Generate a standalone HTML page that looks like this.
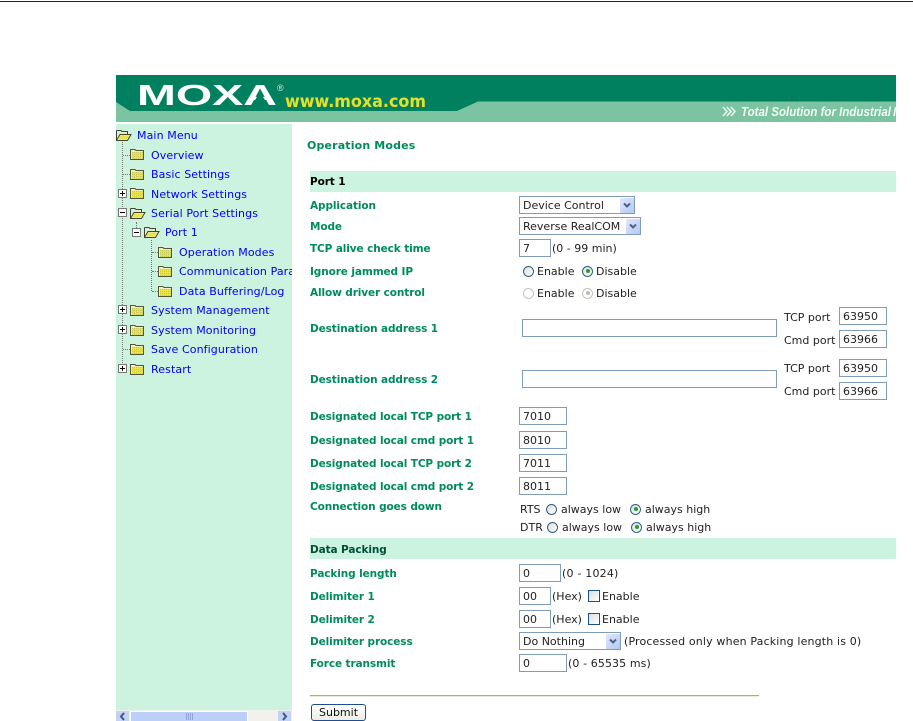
<!DOCTYPE html>
<html><head><meta charset="utf-8"><style>
html,body{margin:0;padding:0;background:#fff;width:913px;height:721px;overflow:hidden}
body{position:relative;font-family:"DejaVu Sans","Liberation Sans",sans-serif;font-size:11px;color:#222}
.t,.l,.m{position:absolute;white-space:nowrap;line-height:14px;height:14px;margin-top:1px}
.m{color:#0000f0;letter-spacing:.1px}
.l{color:#008a60;font-weight:bold;font-size:10.5px;letter-spacing:-.1px}
.b{position:absolute;border:1.5px solid #7f9db9;box-sizing:border-box;background:#fff;font-size:11px;line-height:17px;padding-left:3px;color:#222;white-space:nowrap}
.a{position:absolute;background:linear-gradient(135deg,#dfe8fb,#b4c8f4);border-radius:1px}
.r{position:absolute;width:11px;height:11px;border:1px solid #2f5f80;border-radius:50%;box-sizing:border-box;background:linear-gradient(135deg,#ddd,#fff);margin-top:.5px}
.r.c::after{content:"";position:absolute;left:2.5px;top:2.5px;width:4px;height:4px;border-radius:50%;background:#20a030}
.r.d{border-color:#c4c4bc;background:#fff}
.r.d::after{background:#bbb}
svg{position:absolute;overflow:visible}
.dv{position:absolute;border-left:1px dotted #777;width:0}
.dh{position:absolute;border-top:1px dotted #777;height:0}
</style></head><body>
<div style="position:absolute;left:0;top:1px;width:913px;height:1px;background:#222"></div>

<svg style="left:116px;top:75px" width="780" height="47" viewBox="0 0 780 47">
<defs><clipPath id="bc"><rect width="780" height="47"/></clipPath></defs>
<g clip-path="url(#bc)">
<rect width="780" height="47" fill="#7cc3a1"/>
<path d="M0 0H780V26.500H362L341 36H14L0 27Z" fill="#00805f"/>
<rect x="362" y="26" width="418" height="1" fill="#40a080"/>
<text x="21" y="30" font-family="Liberation Sans" font-weight="bold" font-size="29" fill="#fff" textLength="140" lengthAdjust="spacingAndGlyphs">MOXA</text>
<path d="M141.500 21H146.500L152 30H136Z" fill="#00805f"/>
<text x="161" y="16" font-family="Liberation Sans" font-size="9" fill="#d8ece4">®</text>
<text x="169" y="32" font-family="DejaVu Sans" font-weight="bold" font-size="17" fill="#e6e02a" textLength="141" lengthAdjust="spacingAndGlyphs">www.moxa.com</text>
<path d="M607 32L611 36.500L607 41M611 32L615 36.500L611 41M615 32L619 36.500L615 41" fill="none" stroke="#eef8f2" stroke-width="1.500"/>
<text x="625" y="41" font-family="Liberation Sans" font-weight="bold" font-style="italic" font-size="12.500" fill="#f2faf6" textLength="150" lengthAdjust="spacingAndGlyphs">Total Solution for Industrial</text>
<text x="777" y="41" font-family="Liberation Sans" font-weight="bold" font-style="italic" font-size="12.500" fill="#f2faf6">N</text>
</g></svg>

<div style="position:absolute;left:116px;top:124px;width:176px;height:586px;background:#ccf3df"></div>

<svg width="0" height="0" style="left:0;top:0"><defs>
<g id="f"><path d="M.5 2.500H5L6 3.500H13.500V12.500H.5Z" fill="#f4f0b0" stroke="#55553a"/><rect x="2" y="5" width="11" height="7" fill="#e9e44a"/><path d="M2 5.500h11M2 7.500h11M2 9.500h11M2 11.500h11" stroke="#c8c858" stroke-dasharray="1 1"/></g>
<g id="o"><path d="M.5 2.500H5L6 3.500H11.500V6.500M.5 2.500V12.500H11.500L15 6.500H4L.5 12.500" fill="#f0f0c0" stroke="#44442e"/><path d="M4.500 7.500H13.500L10.500 11.500H2.500Z" fill="#e9e44a"/></g>
<g id="p"><rect x=".5" y=".5" width="8" height="8" fill="#fff" stroke="#777"/><path d="M2 4.500H7M4.500 2V7" stroke="#000"/></g>
<g id="n"><rect x=".5" y=".5" width="8" height="8" fill="#fff" stroke="#777"/><path d="M2 4.500H7" stroke="#000"/></g>
<g id="ch"><path d="M1 1.500L4 4.500L7 1.500" fill="none" stroke="#4d6185" stroke-width="2"/></g>
</defs></svg>

<!-- tree lines -->
<div class="dv" style="left:122px;top:142px;height:227px"></div>
<div class="dh" style="left:123px;top:155px;width:7px"></div>
<div class="dh" style="left:123px;top:174px;width:7px"></div>
<div class="dh" style="left:123px;top:349px;width:7px"></div>
<div class="dv" style="left:136px;top:222px;height:6px"></div>
<div class="dv" style="left:151px;top:240px;height:51px"></div>
<div class="dh" style="left:152px;top:252px;width:6px"></div>
<div class="dh" style="left:152px;top:271px;width:6px"></div>
<div class="dh" style="left:152px;top:291px;width:6px"></div>

<svg style="left:116px;top:128px" width="16" height="14"><use href="#o"/></svg>
<svg style="left:130px;top:147px" width="14" height="14"><use href="#f"/></svg>
<svg style="left:130px;top:167px" width="14" height="14"><use href="#f"/></svg>
<svg style="left:118px;top:189px" width="10" height="10"><use href="#p"/></svg>
<svg style="left:130px;top:186px" width="14" height="14"><use href="#f"/></svg>
<svg style="left:118px;top:208px" width="10" height="10"><use href="#n"/></svg>
<svg style="left:130px;top:206px" width="16" height="14"><use href="#o"/></svg>
<svg style="left:132px;top:228px" width="10" height="10"><use href="#n"/></svg>
<svg style="left:144px;top:225px" width="16" height="14"><use href="#o"/></svg>
<svg style="left:158px;top:245px" width="14" height="14"><use href="#f"/></svg>
<svg style="left:158px;top:264px" width="14" height="14"><use href="#f"/></svg>
<svg style="left:158px;top:284px" width="14" height="14"><use href="#f"/></svg>
<svg style="left:118px;top:305px" width="10" height="10"><use href="#p"/></svg>
<svg style="left:130px;top:303px" width="14" height="14"><use href="#f"/></svg>
<svg style="left:118px;top:325px" width="10" height="10"><use href="#p"/></svg>
<svg style="left:130px;top:323px" width="14" height="14"><use href="#f"/></svg>
<svg style="left:130px;top:342px" width="14" height="14"><use href="#f"/></svg>
<svg style="left:118px;top:364px" width="10" height="10"><use href="#p"/></svg>
<svg style="left:130px;top:362px" width="14" height="14"><use href="#f"/></svg>

<div class="m" style="left:137px;top:128px">Main Menu</div>
<div class="m" style="left:151px;top:148px">Overview</div>
<div class="m" style="left:151px;top:167px">Basic Settings</div>
<div class="m" style="left:151px;top:187px">Network Settings</div>
<div class="m" style="left:151px;top:206px">Serial Port Settings</div>
<div class="m" style="left:165px;top:225px">Port 1</div>
<div class="m" style="left:179px;top:245px">Operation Modes</div>
<div class="m" style="left:179px;top:264px;width:113px;overflow:hidden">Communication Parameters</div>
<div class="m" style="left:179px;top:284px">Data Buffering/Log</div>
<div class="m" style="left:151px;top:303px">System Management</div>
<div class="m" style="left:151px;top:323px">System Monitoring</div>
<div class="m" style="left:151px;top:342px">Save Configuration</div>
<div class="m" style="left:151px;top:362px">Restart</div>

<!-- scrollbar -->
<div style="position:absolute;left:116px;top:710px;width:176px;height:11px;background:#f3f2ea"></div>
<div style="position:absolute;left:116px;top:711px;width:13px;height:10px;background:#c3d3f8"></div>
<div style="position:absolute;left:130px;top:711px;width:118px;height:10px;background:#bccff8;border:1px solid #fff;border-bottom:0;box-sizing:border-box"></div>
<div style="position:absolute;left:278px;top:711px;width:13px;height:10px;background:#c3d3f8"></div>
<svg style="left:119px;top:712px" width="8" height="9"><path d="M5 1L2 4.500L5 8" fill="none" stroke="#44587f" stroke-width="2"/></svg>
<svg style="left:281px;top:712px" width="8" height="9"><path d="M2 1L5 4.500L2 8" fill="none" stroke="#44587f" stroke-width="2"/></svg>
<svg style="left:186px;top:713px" width="8" height="7"><path d="M.5 0V7M2.500 0V7M4.500 0V7M6.500 0V7" stroke="#8ea6dc"/></svg>

<!-- main -->
<div class="l" style="left:307px;top:138px;font-size:11px;letter-spacing:.15px">Operation Modes</div>
<div style="position:absolute;left:310px;top:171px;width:586px;height:21px;background:#ccf3df"></div>
<div class="l" style="left:310px;top:174px;color:#000">Port 1</div>
<div style="position:absolute;left:310px;top:538px;width:586px;height:21px;background:#ccf3df"></div>
<div class="l" style="left:310px;top:542px;color:#004f38">Data Packing</div>

<div class="l" style="left:310px;top:198px">Application</div>
<div class="l" style="left:310px;top:219px">Mode</div>
<div class="l" style="left:310px;top:241px">TCP alive check time</div>
<div class="l" style="left:310px;top:264px">Ignore jammed IP</div>
<div class="l" style="left:310px;top:285px">Allow driver control</div>
<div class="l" style="left:310px;top:321px">Destination address 1</div>
<div class="l" style="left:310px;top:372px">Destination address 2</div>
<div class="l" style="left:310px;top:409px">Designated local TCP port 1</div>
<div class="l" style="left:310px;top:433px">Designated local cmd port 1</div>
<div class="l" style="left:310px;top:456px">Designated local TCP port 2</div>
<div class="l" style="left:310px;top:479px">Designated local cmd port 2</div>
<div class="l" style="left:310px;top:499px">Connection goes down</div>
<div class="l" style="left:310px;top:566px">Packing length</div>
<div class="l" style="left:310px;top:589px">Delimiter 1</div>
<div class="l" style="left:310px;top:612px">Delimiter 2</div>
<div class="l" style="left:310px;top:634px">Delimiter process</div>
<div class="l" style="left:310px;top:656px">Force transmit</div>

<div class="b" style="left:519px;top:196px;width:116px;height:18px">Device Control</div>
<div class="a" style="left:620px;top:197.500px;width:14px;height:15px"></div>
<svg style="left:623px;top:202px" width="8" height="6"><use href="#ch"/></svg>
<div class="b" style="left:519px;top:217px;width:122px;height:18px">Reverse RealCOM</div>
<div class="a" style="left:626px;top:218.500px;width:14px;height:15px"></div>
<svg style="left:629px;top:223px" width="8" height="6"><use href="#ch"/></svg>
<div class="b" style="left:519px;top:239px;width:32px;height:18px">7</div>
<div class="t" style="left:552px;top:241px">(0 - 99 min)</div>

<div class="r" style="left:523px;top:265px"></div><div class="t" style="left:537px;top:264px">Enable</div>
<div class="r c" style="left:582px;top:265px"></div><div class="t" style="left:596px;top:264px">Disable</div>
<div class="r d" style="left:523px;top:287px"></div><div class="t" style="left:537px;top:286px">Enable</div>
<div class="r c d" style="left:582px;top:287px"></div><div class="t" style="left:596px;top:286px">Disable</div>

<div class="b" style="left:522px;top:319px;width:255px;height:18px"></div>
<div class="t" style="left:784px;top:310px">TCP port</div>
<div class="b" style="left:839px;top:307px;width:48px;height:18px">63950</div>
<div class="t" style="left:784px;top:333px">Cmd port</div>
<div class="b" style="left:839px;top:330px;width:48px;height:18px">63966</div>
<div class="b" style="left:522px;top:370px;width:255px;height:18px"></div>
<div class="t" style="left:784px;top:361px">TCP port</div>
<div class="b" style="left:839px;top:359px;width:48px;height:18px">63950</div>
<div class="t" style="left:784px;top:384px">Cmd port</div>
<div class="b" style="left:839px;top:382px;width:48px;height:18px">63966</div>

<div class="b" style="left:519px;top:407px;width:48px;height:18px">7010</div>
<div class="b" style="left:519px;top:431px;width:48px;height:18px">8010</div>
<div class="b" style="left:519px;top:454px;width:48px;height:18px">7011</div>
<div class="b" style="left:519px;top:477px;width:48px;height:18px">8011</div>

<div class="t" style="left:520px;top:502px">RTS</div>
<div class="r" style="left:546px;top:503px"></div><div class="t" style="left:561px;top:502px">always low</div>
<div class="r c" style="left:630px;top:503px"></div><div class="t" style="left:645px;top:502px">always high</div>
<div class="t" style="left:520px;top:520px">DTR</div>
<div class="r" style="left:547px;top:521px"></div><div class="t" style="left:562px;top:520px">always low</div>
<div class="r c" style="left:631px;top:521px"></div><div class="t" style="left:646px;top:520px">always high</div>

<div class="b" style="left:519px;top:564px;width:42px;height:18px">0</div>
<div class="t" style="left:562px;top:566px;letter-spacing:.2px">(0 - 1024)</div>
<div class="b" style="left:519px;top:587px;width:32px;height:18px">00</div>
<div class="t" style="left:552px;top:589px">(Hex)</div>
<div style="position:absolute;left:588px;top:590px;width:12px;height:12px;box-sizing:border-box;border:1px solid #1c5180;background:linear-gradient(135deg,#ddd,#fff)"></div>
<div class="t" style="left:602px;top:589px">Enable</div>
<div class="b" style="left:519px;top:610px;width:32px;height:18px">00</div>
<div class="t" style="left:552px;top:612px">(Hex)</div>
<div style="position:absolute;left:588px;top:613px;width:12px;height:12px;box-sizing:border-box;border:1px solid #1c5180;background:linear-gradient(135deg,#ddd,#fff)"></div>
<div class="t" style="left:602px;top:612px">Enable</div>
<div class="b" style="left:519px;top:632px;width:102px;height:18px">Do Nothing</div>
<div class="a" style="left:606px;top:633.500px;width:14px;height:15px"></div>
<svg style="left:609px;top:638px" width="8" height="6"><use href="#ch"/></svg>
<div class="t" style="left:624px;top:634px;letter-spacing:.15px">(Processed only when Packing length is 0)</div>
<div class="b" style="left:519px;top:654px;width:48px;height:18px">0</div>
<div class="t" style="left:568px;top:656px;letter-spacing:.1px">(0 - 65535 ms)</div>

<div style="position:absolute;left:310px;top:695px;width:449px;height:1px;background:#aca899"></div>
<div style="position:absolute;left:310px;top:696px;width:449px;height:1px;background:#eeead8"></div>
<div style="position:absolute;left:311px;top:704px;width:55px;height:17px;box-sizing:border-box;border:1.500px solid #1f4d90;border-radius:3px;background:linear-gradient(#fff,#eeeee4);text-align:center;line-height:15px;color:#111">Submit</div>
</body></html>
